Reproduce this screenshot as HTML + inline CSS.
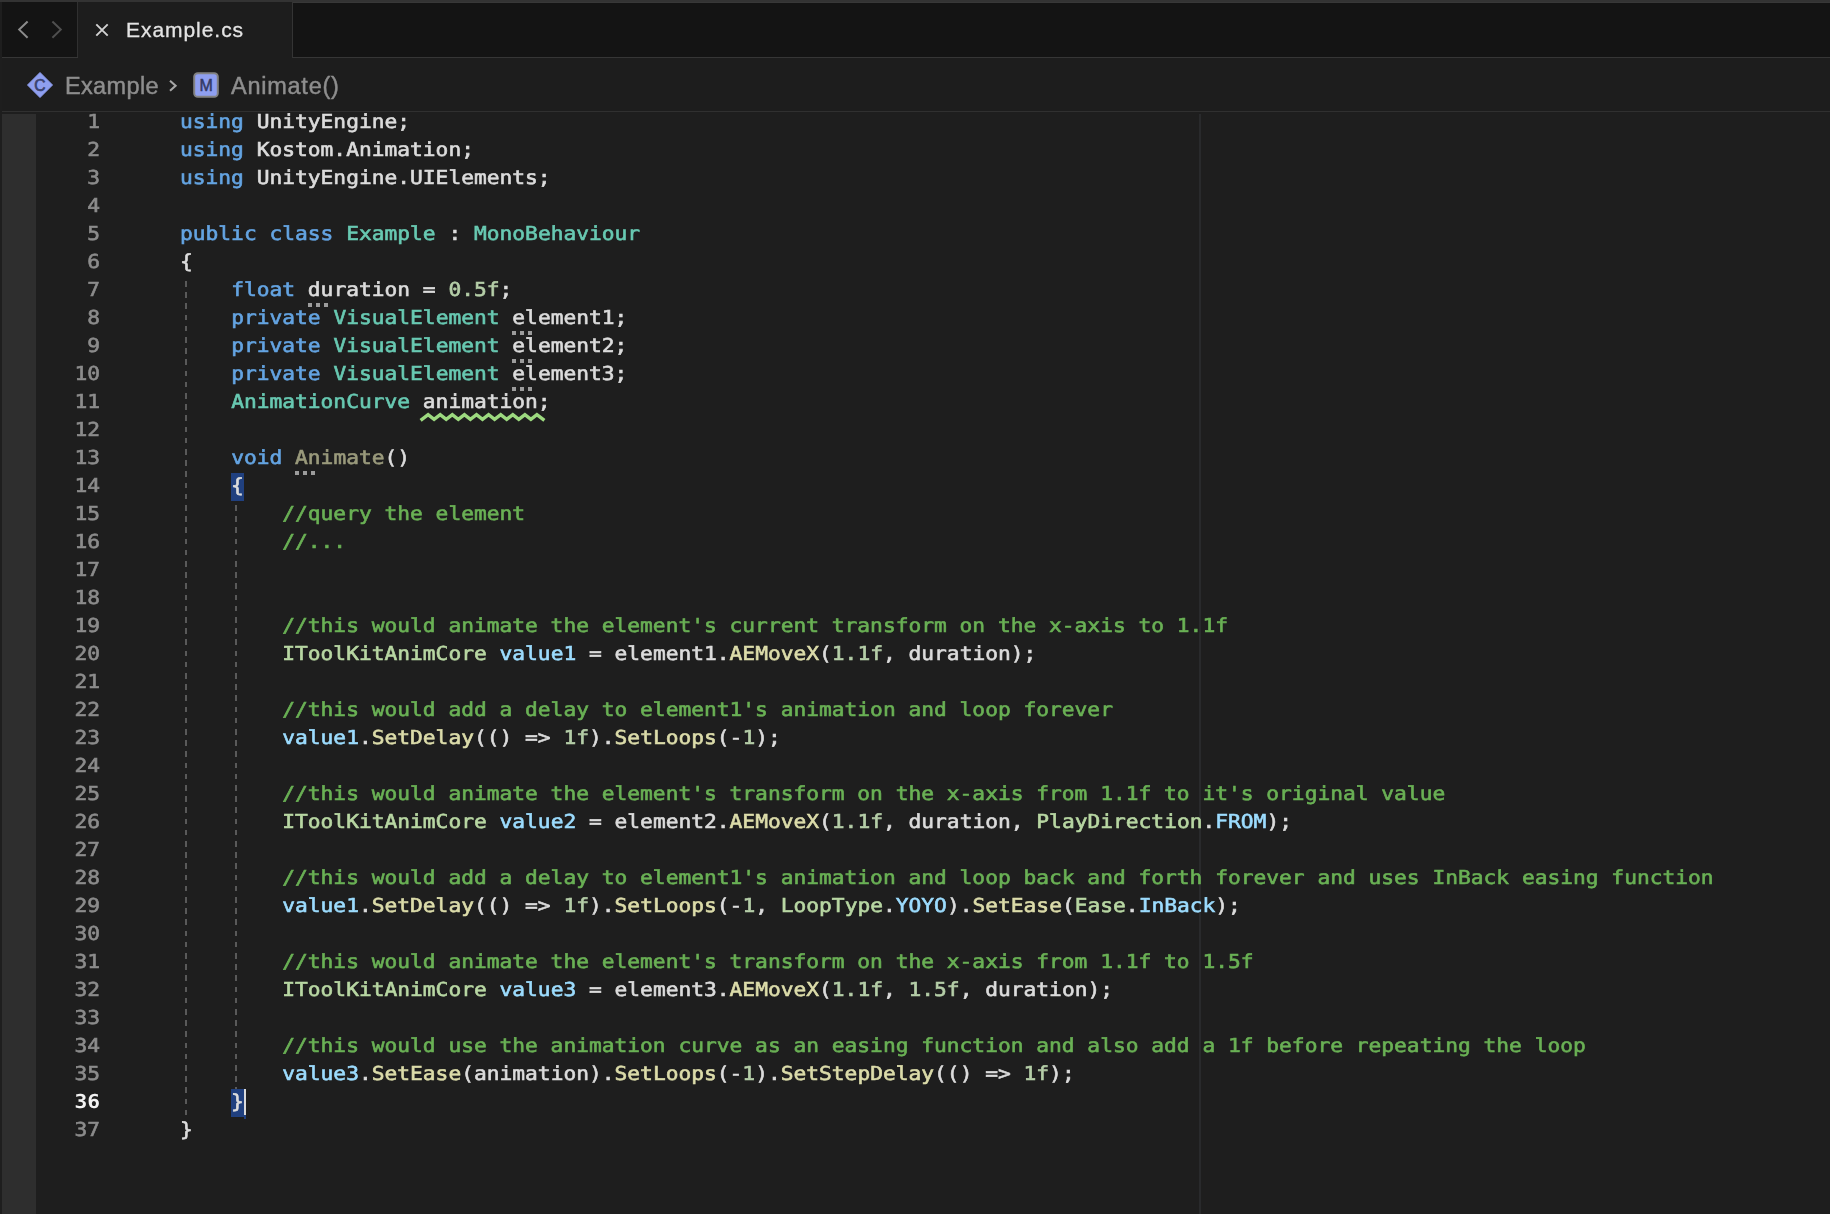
<!DOCTYPE html>
<html lang="en">
<head>
<meta charset="utf-8">
<title>Example.cs</title>
<style>
*{box-sizing:border-box;margin:0;padding:0}
html,body{width:1830px;height:1214px;overflow:hidden;background:#1e1e1e}
body{position:relative;font-family:"Liberation Sans",sans-serif;color:#dcdcdc}
.abs{position:absolute}
.topstrip{position:absolute;left:0;top:0;width:1830px;height:2px;background:#333}
.tabbar{position:absolute;left:2px;top:2px;width:1828px;height:56px;background:#141414;border-bottom:1px solid #363636}
.tabtop{position:absolute;left:291px;top:0;width:1537px;height:1px;background:#383838}
.nav{position:absolute;left:0;top:0;width:76px;height:55px;border-right:1px solid #303030}
.tab{position:absolute;left:76px;top:0;width:215px;height:56px;background:#1d1d1d;border-right:1px solid #343434}
.tab .ttl{position:absolute;left:48.2px;top:14px;font-size:21px;line-height:28px;color:#e4e4e4;white-space:pre;letter-spacing:.95px;-webkit-text-stroke:.3px;will-change:transform}
.crumbs{position:absolute;left:2px;top:58px;width:1828px;height:54px;background:#1d1d1d;border-bottom:1px solid #303030}
.crumbs .tx{position:absolute;top:14px;font-size:23.5px;line-height:28px;color:#8e8e8e;-webkit-text-stroke:.45px;white-space:pre;will-change:transform}
.editor{position:absolute;left:0;top:112px;width:1830px;height:1102px;background:#1e1e1e;overflow:hidden}
.gutter{position:absolute;left:2px;top:2px;width:34px;height:1100px;background:#2e2e2e}
.nums{position:absolute;left:0;top:0;width:99.8px;height:1102px;will-change:transform}
.num{position:absolute;right:0;width:60px;height:28px;text-align:right;font:19.2px/25.6px "DejaVu Sans Mono","Liberation Mono",monospace;text-rendering:geometricPrecision;-webkit-text-stroke:.6px;transform:scaleX(1.1063);transform-origin:100% 0;color:#8c8c8c;white-space:pre}
.num.cur{color:#f2f2f2;font-weight:bold;-webkit-text-stroke:0}
.code{position:absolute;left:0;top:0;width:1830px;height:1102px;will-change:transform}
.ln{position:absolute;left:179.8px;height:28px;font:19.2px/25.6px "DejaVu Sans Mono","Liberation Mono",monospace;text-rendering:geometricPrecision;-webkit-text-stroke:.6px;transform:scaleX(1.1063);transform-origin:0 0;color:#dcdcdc;white-space:pre}
.k{color:#64a4e2}
.t{color:#68c9b2}
.n{color:#b5cea8}
.c{color:#6ab155}
.m{color:#dcdcaa}
.i{color:#b8d7a3}
.l{color:#9cdcfe}
.d{color:#9a9a7c}
.guide{position:absolute;width:2px;background:repeating-linear-gradient(to bottom,#595959 0,#595959 5.6px,transparent 5.6px,transparent 11.2px)}
.hl{position:absolute;width:13px;height:28px;background:#20407f}
.caret{position:absolute;width:2px;height:26px;background:#dadada}
.ruler{position:absolute;left:1199px;top:2px;width:2px;height:1100px;background:#292a2c}
.dots{position:absolute;width:20px;height:4px;background:linear-gradient(to right,#9c9c9c 0,#9c9c9c 4px,transparent 4px,transparent 8px,#9c9c9c 8px,#9c9c9c 12px,transparent 12px,transparent 16px,#9c9c9c 16px,#9c9c9c 20px)}

</style>
</head>
<body>
<div class="topstrip"></div>
<div class="tabbar">
  <div class="tabtop"></div>
  <div class="nav">
    <svg class="abs" style="left:0;top:0" width="76" height="55" viewBox="0 0 76 55">
      <polyline points="25.6,19.5 17.2,27.6 25.6,35.7" fill="none" stroke="#8c8c8c" stroke-width="2"/>
      <polyline points="50.4,19.5 58.8,27.6 50.4,35.7" fill="none" stroke="#4f4f4f" stroke-width="2"/>
    </svg>
  </div>
  <div class="tab">
    <svg class="abs" style="left:16px;top:20px" width="16" height="16" viewBox="0 0 16 16">
      <path d="M2.3 2.3 L13.7 13.7 M13.7 2.3 L2.3 13.7" fill="none" stroke="#d2d2d2" stroke-width="1.9"/>
    </svg>
    <div class="ttl">Example.cs</div>
  </div>
</div>
<div class="crumbs">
  <svg class="abs" style="left:24px;top:13px" width="28" height="28" viewBox="0 0 28 28">
    <path d="M14 1.5 L26.5 14 L14 26.5 L1.5 14 Z" fill="#8f9ff0" stroke="#8f9ff0" stroke-width="1" stroke-linejoin="round"/>
    <text x="14" y="19.6" text-anchor="middle" font-family="Liberation Sans, sans-serif" font-size="15.6" fill="#3b426f" stroke="#3b426f" stroke-width=".7">C</text>
  </svg>
  <div class="tx" style="left:62.6px;letter-spacing:.35px">Example</div>
  <svg class="abs" style="left:165px;top:21px" width="12" height="14" viewBox="0 0 12 14">
    <polyline points="3,1.7 8.6,6.7 3,11.7" fill="none" stroke="#a6a6a6" stroke-width="2.1"/>
  </svg>
  <svg class="abs" style="left:191px;top:14px" width="27" height="27" viewBox="0 0 27 27">
    <rect x="1.2" y="1.2" width="23.6" height="23.6" rx="3.6" ry="3.6" fill="#8f9ff0" stroke="#828282" stroke-width="2"/>
    <text x="13.1" y="18.6" text-anchor="middle" font-family="Liberation Sans, sans-serif" font-size="16" fill="#333a66" stroke="#333a66" stroke-width=".5">M</text>
  </svg>
  <div class="tx" style="left:228.5px;letter-spacing:.75px">Animate()</div>
</div>
<div class="editor">
<div class="nums">
<div class="num" style="top:-3px">1</div>
<div class="num" style="top:25px">2</div>
<div class="num" style="top:53px">3</div>
<div class="num" style="top:81px">4</div>
<div class="num" style="top:109px">5</div>
<div class="num" style="top:137px">6</div>
<div class="num" style="top:165px">7</div>
<div class="num" style="top:193px">8</div>
<div class="num" style="top:221px">9</div>
<div class="num" style="top:249px">10</div>
<div class="num" style="top:277px">11</div>
<div class="num" style="top:305px">12</div>
<div class="num" style="top:333px">13</div>
<div class="num" style="top:361px">14</div>
<div class="num" style="top:389px">15</div>
<div class="num" style="top:417px">16</div>
<div class="num" style="top:445px">17</div>
<div class="num" style="top:473px">18</div>
<div class="num" style="top:501px">19</div>
<div class="num" style="top:529px">20</div>
<div class="num" style="top:557px">21</div>
<div class="num" style="top:585px">22</div>
<div class="num" style="top:613px">23</div>
<div class="num" style="top:641px">24</div>
<div class="num" style="top:669px">25</div>
<div class="num" style="top:697px">26</div>
<div class="num" style="top:725px">27</div>
<div class="num" style="top:753px">28</div>
<div class="num" style="top:781px">29</div>
<div class="num" style="top:809px">30</div>
<div class="num" style="top:837px">31</div>
<div class="num" style="top:865px">32</div>
<div class="num" style="top:893px">33</div>
<div class="num" style="top:921px">34</div>
<div class="num" style="top:949px">35</div>
<div class="num cur" style="top:977px">36</div>
<div class="num" style="top:1005px">37</div>
</div>
<div class="gutter"></div>
<div class="ruler"></div>
<div class="guide" style="left:185px;top:169px;height:836px"></div>
<div class="guide" style="left:235px;top:393px;height:584px"></div>
<div class="hl" style="left:231px;top:361px"></div>
<div class="hl" style="left:231px;top:977px"></div>
<div class="hl" style="left:244px;top:1003px;width:2px;height:4px"></div>
<div class="caret" style="left:244px;top:977px"></div>
<div class="dots" style="left:307.6px;top:191px"></div>
<div class="dots" style="left:512.1px;top:219px"></div>
<div class="dots" style="left:512.1px;top:247px"></div>
<div class="dots" style="left:512.1px;top:275px"></div>
<div class="dots" style="left:294.8px;top:359px"></div>
<svg class="abs" style="left:416px;top:296px" width="134" height="18" viewBox="0 0 134 18"><polyline points="6.0,11.3 12.1,6.7 18.1,11.3 24.2,6.7 30.2,11.3 36.3,6.7 42.3,11.3 48.4,6.7 54.4,11.3 60.5,6.7 66.5,11.3 72.6,6.7 78.6,11.3 84.7,6.7 90.7,11.3 96.8,6.7 102.8,11.3 108.9,6.7 114.9,11.3 120.9,6.7 127.0,11.3" fill="none" stroke="#9cd97f" stroke-width="3.5" stroke-linejoin="miter" stroke-linecap="square"/></svg>
<div class="code">
<div class="ln" style="top:-3px"><span class="k">using</span> UnityEngine;</div>
<div class="ln" style="top:25px"><span class="k">using</span> Kostom.Animation;</div>
<div class="ln" style="top:53px"><span class="k">using</span> UnityEngine.UIElements;</div>
<div class="ln" style="top:81px"></div>
<div class="ln" style="top:109px"><span class="k">public</span> <span class="k">class</span> <span class="t">Example</span> : <span class="t">MonoBehaviour</span></div>
<div class="ln" style="top:137px">{</div>
<div class="ln" style="top:165px">    <span class="k">float</span> duration = <span class="n">0.5f</span>;</div>
<div class="ln" style="top:193px">    <span class="k">private</span> <span class="t">VisualElement</span> element1;</div>
<div class="ln" style="top:221px">    <span class="k">private</span> <span class="t">VisualElement</span> element2;</div>
<div class="ln" style="top:249px">    <span class="k">private</span> <span class="t">VisualElement</span> element3;</div>
<div class="ln" style="top:277px">    <span class="t">AnimationCurve</span> animation;</div>
<div class="ln" style="top:305px"></div>
<div class="ln" style="top:333px">    <span class="k">void</span> <span class="d">Animate</span>()</div>
<div class="ln" style="top:361px">    {</div>
<div class="ln" style="top:389px">        <span class="c">//query the element</span></div>
<div class="ln" style="top:417px">        <span class="c">//...</span></div>
<div class="ln" style="top:445px"></div>
<div class="ln" style="top:473px"></div>
<div class="ln" style="top:501px">        <span class="c">//this would animate the element's current transform on the x-axis to 1.1f</span></div>
<div class="ln" style="top:529px">        <span class="i">IToolKitAnimCore</span> <span class="l">value1</span> = element1.<span class="m">AEMoveX</span>(<span class="n">1.1f</span>, duration);</div>
<div class="ln" style="top:557px"></div>
<div class="ln" style="top:585px">        <span class="c">//this would add a delay to element1's animation and loop forever</span></div>
<div class="ln" style="top:613px">        <span class="l">value1</span>.<span class="m">SetDelay</span>(() =&gt; <span class="n">1f</span>).<span class="m">SetLoops</span>(-<span class="n">1</span>);</div>
<div class="ln" style="top:641px"></div>
<div class="ln" style="top:669px">        <span class="c">//this would animate the element's transform on the x-axis from 1.1f to it's original value</span></div>
<div class="ln" style="top:697px">        <span class="i">IToolKitAnimCore</span> <span class="l">value2</span> = element2.<span class="m">AEMoveX</span>(<span class="n">1.1f</span>, duration, <span class="i">PlayDirection</span>.<span class="l">FROM</span>);</div>
<div class="ln" style="top:725px"></div>
<div class="ln" style="top:753px">        <span class="c">//this would add a delay to element1's animation and loop back and forth forever and uses InBack easing function</span></div>
<div class="ln" style="top:781px">        <span class="l">value1</span>.<span class="m">SetDelay</span>(() =&gt; <span class="n">1f</span>).<span class="m">SetLoops</span>(-<span class="n">1</span>, <span class="i">LoopType</span>.<span class="l">YOYO</span>).<span class="m">SetEase</span>(<span class="i">Ease</span>.<span class="l">InBack</span>);</div>
<div class="ln" style="top:809px"></div>
<div class="ln" style="top:837px">        <span class="c">//this would animate the element's transform on the x-axis from 1.1f to 1.5f</span></div>
<div class="ln" style="top:865px">        <span class="i">IToolKitAnimCore</span> <span class="l">value3</span> = element3.<span class="m">AEMoveX</span>(<span class="n">1.1f</span>, <span class="n">1.5f</span>, duration);</div>
<div class="ln" style="top:893px"></div>
<div class="ln" style="top:921px">        <span class="c">//this would use the animation curve as an easing function and also add a 1f before repeating the loop</span></div>
<div class="ln" style="top:949px">        <span class="l">value3</span>.<span class="m">SetEase</span>(animation).<span class="m">SetLoops</span>(-<span class="n">1</span>).<span class="m">SetStepDelay</span>(() =&gt; <span class="n">1f</span>);</div>
<div class="ln" style="top:977px">    }</div>
<div class="ln" style="top:1005px">}</div>
</div>
</div>
</body>
</html>
